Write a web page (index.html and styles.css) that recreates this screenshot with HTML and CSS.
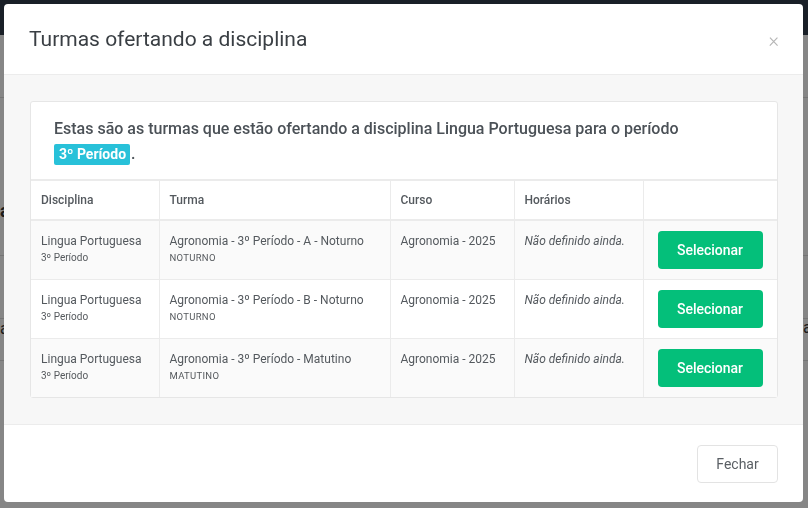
FILE: index.html
```html
<!DOCTYPE html>
<html lang="pt-BR">
<head>
<meta charset="utf-8">
<title>Turmas ofertando a disciplina</title>
<link rel="stylesheet" href="styles.css">
</head>
<body>
<div class="page">
  <div class="topbar"></div>
  <div class="page-body">
    <div class="bg-line l1"></div>
    <div class="bg-text t1">a</div>
    <div class="bg-line l2"></div>
    <div class="bg-line l3"></div>
    <div class="bg-text t2">a</div>
    <div class="bg-text t3">a</div>
    <div class="bg-line l4"></div>
  </div>
</div>
<div class="overlay"></div>
<div class="modal">
  <div class="modal-header">
    <h1 class="modal-title">Turmas ofertando a disciplina</h1>
    <span class="close">×</span>
  </div>
  <div class="modal-body">
    <div class="card">
      <div class="card-head">
        Estas são as turmas que estão ofertando a disciplina Lingua Portuguesa para o período
        <br><span class="badge">3º Período</span>.
      </div>
      <table class="tbl">
        <colgroup>
          <col class="c1"><col class="c2"><col class="c3"><col class="c4"><col class="c5">
        </colgroup>
        <thead>
          <tr><th>Disciplina</th><th>Turma</th><th>Curso</th><th>Horários</th><th></th></tr>
        </thead>
        <tbody>
          <tr class="odd">
            <td>Lingua Portuguesa<div class="sub">3º Período</div></td>
            <td>Agronomia - 3º Período - A - Noturno<div class="sub up">NOTURNO</div></td>
            <td>Agronomia - 2025</td>
            <td><em>Não definido ainda.</em></td>
            <td class="act"><button class="btn-sel">Selecionar</button></td>
          </tr>
          <tr>
            <td>Lingua Portuguesa<div class="sub">3º Período</div></td>
            <td>Agronomia - 3º Período - B - Noturno<div class="sub up">NOTURNO</div></td>
            <td>Agronomia - 2025</td>
            <td><em>Não definido ainda.</em></td>
            <td class="act"><button class="btn-sel">Selecionar</button></td>
          </tr>
          <tr class="odd">
            <td>Lingua Portuguesa<div class="sub">3º Período</div></td>
            <td>Agronomia - 3º Período - Matutino<div class="sub up">MATUTINO</div></td>
            <td>Agronomia - 2025</td>
            <td><em>Não definido ainda.</em></td>
            <td class="act"><button class="btn-sel">Selecionar</button></td>
          </tr>
        </tbody>
      </table>
    </div>
  </div>
  <div class="modal-footer">
    <button class="btn-close">Fechar</button>
  </div>
</div>
</body>
</html>
```
FILE: styles.css
```css
* { box-sizing: border-box; }
html, body { margin: 0; padding: 0; }
body {
  width: 808px;
  height: 508px;
  overflow: hidden;
  font-family: Roboto, "Liberation Sans", Arial, sans-serif;
  background: #f0f0f0;
}
.page { height: 508px; }
.topbar { height: 35px; background: #2f3a48; }
.page-body { position: relative; height: 473px; background: #f4f4f4; }
.bg-line { position: absolute; left: 0; right: 0; height: 1px; background: #d6d6d6; }
.l1 { top: 62px; }
.l2 { top: 220px; }
.l3 { top: 283px; }
.l4 { top: 325px; }
.bg-text { position: absolute; font-size: 16px; color: #333; line-height: 20px; }
.t1 { left: 0; top: 166px; font-weight: 700; font-size: 18px; width: 5px; overflow: hidden; }
.t2 { left: 0; top: 284px; width: 4px; overflow: hidden; }
.t3 { right: 0; top: 283px; width: 5px; overflow: hidden; }
.overlay {
  position: fixed;
  inset: 0;
  background: rgba(0, 0, 0, 0.45);
}
.modal {
  position: fixed;
  left: 4px;
  top: 4px;
  width: 799px;
  height: 498px;
  background: #fff;
  border-radius: 4px;
  display: flex;
  flex-direction: column;
  overflow: hidden;
}
.modal-header {
  height: 71px;
  display: flex;
  align-items: center;
  justify-content: space-between;
  padding: 0 24px 0 25px;
  border-bottom: 1px solid #ececec;
}
.modal-title {
  margin: 0;
  font-size: 21px;
  font-weight: 400;
  color: #3a3f44;
  letter-spacing: 0;
}
.close {
  font-size: 20px;
  color: #b5b5b5;
  font-weight: 300;
  line-height: 1;
  margin-top: 2px;
}
.modal-body {
  background: #f7f7f7;
  padding: 26px 25px 26px 26px;
  height: 349px;
}
.card {
  background: #fff;
  border: 1px solid #e6e6e6;
  border-radius: 3px;
}
.card-head {
  padding: 14px 23px 13px;
  font-size: 16px;
  font-weight: 500;
  color: #4b5157;
  line-height: 25px;
}
.badge {
  display: inline-block;
  background: #28c1d9;
  color: #fff;
  font-weight: 700;
  font-size: 14px;
  line-height: 21px;
  padding: 0 4px 0 5px;
  border-radius: 2px;
  margin-right: 1px;
}
.tbl {
  width: 100%;
  border-collapse: collapse;
  table-layout: fixed;
  font-size: 12px;
  color: #54595e;
}
.c1 { width: 128px; }
.c2 { width: 231px; }
.c3 { width: 124px; }
.c4 { width: 129px; }
.c5 { width: auto; }
.tbl th, .tbl td {
  border: 1px solid #ebebeb;
  text-align: left;
  vertical-align: top;
  padding: 11px 10px 10px;
  line-height: 18px;
}
.tbl tr > :first-child { border-left: 0; }
.tbl tr > :last-child { border-right: 0; }
.tbl tbody tr:last-child td { border-bottom: 0; }
.tbl th {
  font-weight: 500;
  color: #54595e;
  padding: 10px 10px 10px;
  border-top: 2px solid #ebebeb;
  border-bottom: 2px solid #ebebeb;
}
.tbl tr.odd td { background: #fafafa; }
.tbl em { font-style: italic; }
.sub {
  font-size: 10px;
  line-height: 16px;
  color: #55595d;
}
.sub.up { font-size: 9.5px; letter-spacing: 0.3px; }
.tbl td.act { padding: 10px 14px 10px 14px; }
.btn-sel {
  display: block;
  width: 105px;
  height: 38px;
  border: 0;
  border-radius: 4px;
  background: #04bf7a;
  color: #fff;
  font-family: inherit;
  font-size: 14px;
  font-weight: 500;
}
.modal-footer {
  flex: 1;
  border-top: 1px solid #ececec;
  display: flex;
  justify-content: flex-end;
  align-items: flex-start;
  padding: 20px 25px 0 0;
}
.btn-close {
  width: 81px;
  height: 38px;
  border: 1px solid #e3e3e3;
  border-radius: 4px;
  background: #fff;
  color: #5a5f64;
  font-family: inherit;
  font-size: 14px;
}
```
